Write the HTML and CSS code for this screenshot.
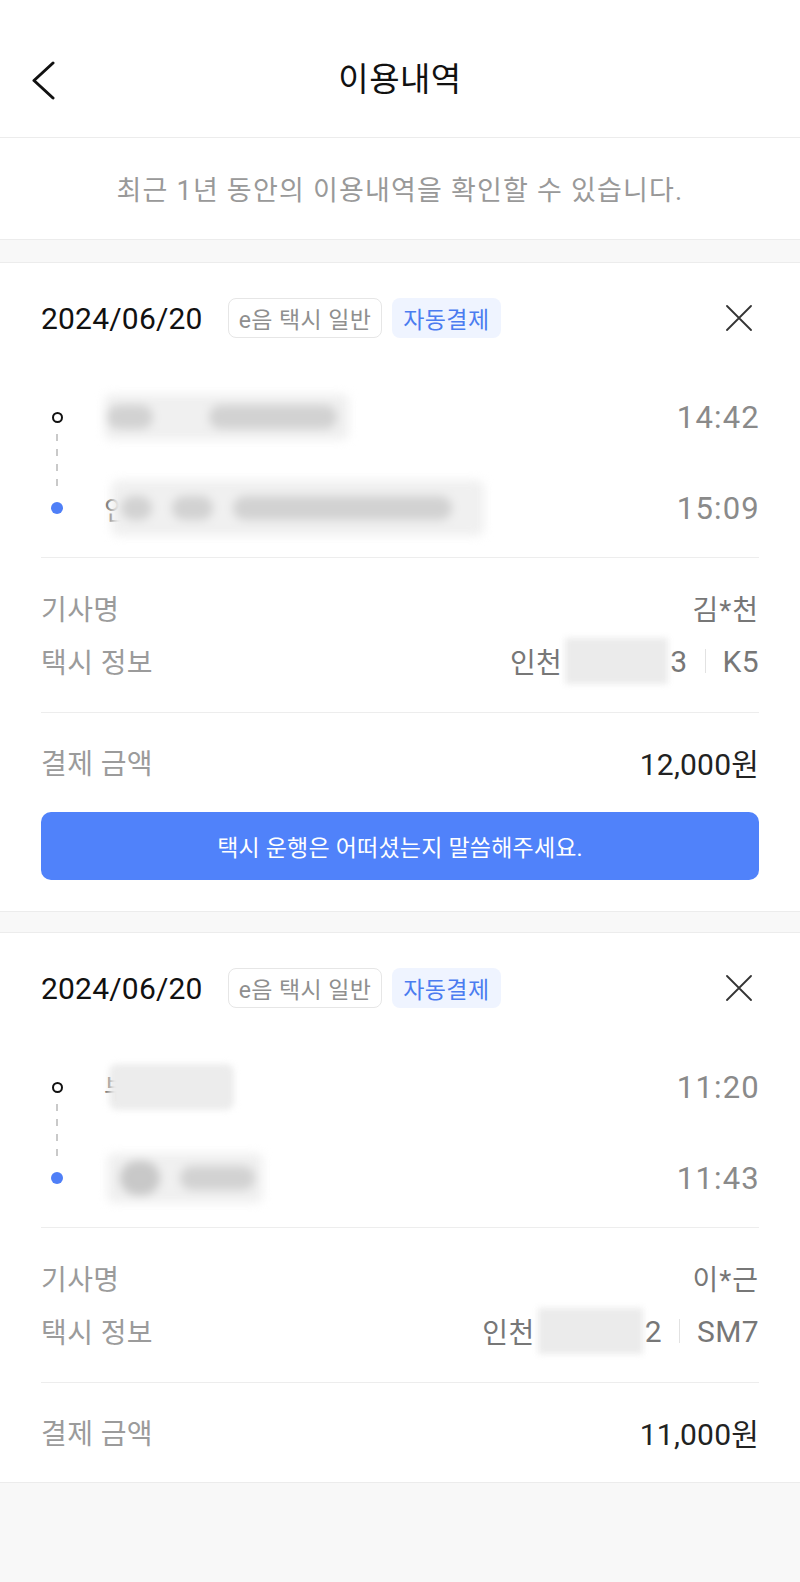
FILE: index.html
```html
<!DOCTYPE html>
<html lang="ko">
<head>
<meta charset="utf-8">
<title>이용내역</title>
<link rel="stylesheet" href="styles.css">
</head>
<body>
<div class="page">
  <header class="topbar">
    <div class="nav">
      <button class="back" aria-label="뒤로">
        <svg width="30" height="40" viewBox="0 0 30 40"><path d="M23 3 L4 20.5 L23 38" fill="none" stroke="#111" stroke-width="3" stroke-linecap="round" stroke-linejoin="round"/></svg>
      </button>
      <h1 class="title">이용내역</h1>
      <span class="nav-spacer"></span>
    </div>
  </header>

  <section class="notice">최근 1년 동안의 이용내역을 확인할 수 있습니다.</section>

  <article class="card card-first">
    <div class="card-head">
      <span class="date">2024/06/20</span>
      <span class="badge badge-line">e음 택시 일반</span>
      <span class="badge badge-blue">자동결제</span>
      <button class="close" aria-label="삭제">
        <svg width="26" height="26" viewBox="0 0 26 26"><path d="M1 1 L25 25 M25 1 L1 25" fill="none" stroke="#333" stroke-width="1.8" stroke-linecap="round"/></svg>
      </button>
    </div>
    <div class="route">
      <div class="track">
        <span class="dot-origin"></span>
        <span class="dash"></span>
        <span class="dot-dest"></span>
      </div>
      <div class="addr">
        <span class="smudge sm-a"><i class="b-46"></i><i class="b-128"></i></span>
      </div>
      <div class="time">14:42</div>
      <div class="addr">
        <span class="peek">인</span>
        <span class="smudge sm-b"><i class="b-31"></i><i class="b-41"></i><i class="b-219"></i></span>
      </div>
      <div class="time">15:09</div>
    </div>
    <div class="info">
      <div class="row"><span class="label">기사명</span><span class="value">김*천</span></div>
      <div class="row"><span class="label">택시 정보</span>
        <span class="value plate"><span class="city">인천</span><span class="plate-mask pm-1"></span><span class="num">3</span><span class="sep"></span><span class="num">K5</span></span>
      </div>
    </div>
    <div class="pay">
      <div class="row"><span class="label">결제 금액</span><span class="amount">12,000원</span></div>
    </div>
    <button class="feedback">택시 운행은 어떠셨는지 말씀해주세요.</button>
  </article>

  <article class="card card-next">
    <div class="card-head">
      <span class="date">2024/06/20</span>
      <span class="badge badge-line">e음 택시 일반</span>
      <span class="badge badge-blue">자동결제</span>
      <button class="close" aria-label="삭제">
        <svg width="26" height="26" viewBox="0 0 26 26"><path d="M1 1 L25 25 M25 1 L1 25" fill="none" stroke="#333" stroke-width="1.8" stroke-linecap="round"/></svg>
      </button>
    </div>
    <div class="route">
      <div class="track">
        <span class="dot-origin"></span>
        <span class="dash"></span>
        <span class="dot-dest"></span>
      </div>
      <div class="addr">
        <span class="peek">부</span>
        <span class="smudge sm-c"></span>
      </div>
      <div class="time">11:20</div>
      <div class="addr">
        <span class="smudge sm-d"><i class="b-40 round"></i><i class="b-75"></i></span>
      </div>
      <div class="time">11:43</div>
    </div>
    <div class="info">
      <div class="row"><span class="label">기사명</span><span class="value">이*근</span></div>
      <div class="row"><span class="label">택시 정보</span>
        <span class="value plate"><span class="city">인천</span><span class="plate-mask pm-2"></span><span class="num">2</span><span class="sep"></span><span class="num">SM7</span></span>
      </div>
    </div>
    <div class="pay">
      <div class="row"><span class="label">결제 금액</span><span class="amount">11,000원</span></div>
    </div>
  </article>
</div>
</body>
</html>
```

FILE: styles.css
```css
* { box-sizing: border-box; }

html, body {
  margin: 0;
  padding: 0;
}

body {
  background: #f8f8f8;
  font-family: Roboto, "Noto Sans CJK KR", sans-serif;
  color: #111;
  min-height: 1582px;
}

.page {
  width: 800px;
}

/* header */
.topbar {
  background: #fff;
  padding: 52px 0 29px;
  border-bottom: 1px solid #ececec;
}

.nav {
  height: 56px;
  display: grid;
  grid-template-columns: 1fr auto 1fr;
  align-items: center;
}

.back {
  justify-self: start;
  margin-left: 30px;
  padding: 0;
  border: 0;
  background: none;
  width: 30px;
  height: 40px;
  display: flex;
}

.title {
  margin: 0;
  font-size: 33px;
  font-weight: 400;
  color: #111;
  line-height: 56px;
  letter-spacing: 0.5px;
}

/* notice */
.notice {
  background: #fff;
  height: 102px;
  border-bottom: 1px solid #ececec;
  display: flex;
  align-items: center;
  justify-content: center;
  font-size: 27px;
  color: #999;
  letter-spacing: 1.2px;
}

/* cards */
.card {
  background: #fff;
  border-top: 1px solid #ececec;
  border-bottom: 1px solid #ececec;
  padding: 35px 41px 0;
}

.card-first { margin-top: 22px; }
.card-next { margin-top: 20px; }

.card-head {
  height: 40px;
  display: flex;
  align-items: center;
  gap: 10px;
}

.date {
  font-size: 30px;
  color: #111;
  margin-right: 15px;
  letter-spacing: 0.2px;
}

.badge {
  height: 40px;
  display: inline-flex;
  align-items: center;
  padding: 0 10px;
  font-size: 23px;
  border-radius: 8px;
  letter-spacing: 0.4px;
}

.badge-line {
  border: 1.5px solid #e6e6e6;
  color: #8f8f8f;
}

.badge-blue {
  background: #eff4ff;
  color: #4b7cf0;
  padding: 0 11px;
}

.close {
  margin-left: auto;
  margin-right: 7px;
  padding: 0;
  border: 0;
  background: none;
  width: 26px;
  height: 26px;
  display: flex;
}

/* route */
.route {
  margin-top: 54px;
  padding-bottom: 24px;
  border-bottom: 1px solid #ededed;
  display: grid;
  grid-template-columns: 32px 1fr auto;
  grid-template-rows: 50px 50px;
  column-gap: 31px;
  row-gap: 41px;
}

.track {
  grid-column: 1;
  grid-row: 1 / 3;
  display: flex;
  flex-direction: column;
  align-items: center;
  padding: 20px 0 19px;
}

.dot-origin {
  width: 11px;
  height: 11px;
  border: 2px solid #111;
  border-radius: 50%;
  flex: none;
}

.dash {
  flex: 1;
  width: 2px;
  margin: 11px 0 11px;
  background: repeating-linear-gradient(to bottom, #c9c9c9 0 7px, transparent 7px 15px);
}

.dot-dest {
  width: 12px;
  height: 12px;
  border-radius: 50%;
  background: #4f7ff7;
  flex: none;
}

.addr {
  display: flex;
  align-items: center;
  min-width: 0;
}

.time {
  font-size: 31px;
  color: #8a8a8a;
  display: flex;
  align-items: center;
  justify-content: flex-end;
  letter-spacing: 1.2px;
  margin-right: -1px;
}

.peek {
  font-size: 27px;
  color: #666;
  flex: none;
}

.smudge {
  display: flex;
  align-items: center;
  height: 46px;
  background: #f0f0f0;
  border-radius: 8px;
  filter: blur(5px);
  flex: none;
}

.smudge i {
  display: block;
  height: 24px;
  background: #d2d2d2;
  border-radius: 12px;
  flex: none;
}

.sm-a { width: 245px; padding-left: 3px; gap: 56px; }
.sm-b { width: 373px; height: 56px; padding-left: 10px; gap: 20px; margin-left: -18px; }
.sm-c { width: 125px; margin-left: -20px; background: #ececec; filter: blur(3px); }
.sm-d { width: 156px; height: 50px; margin-left: 3px; padding-left: 13px; gap: 20px; }

.b-31 { width: 31px; }
.b-40 { width: 40px; }
.b-41 { width: 41px; }
.b-46 { width: 46px; }
.b-75 { width: 75px; }
.b-128 { width: 128px; }
.b-219 { width: 219px; }
.smudge i.round { height: 34px; border-radius: 17px; background: #c8c8c8; }

/* info */
.info {
  padding: 32px 0 33px;
  border-bottom: 1px solid #ededed;
  display: grid;
  row-gap: 17px;
}

.row {
  height: 36px;
  display: flex;
  align-items: center;
  justify-content: space-between;
}

.label {
  font-size: 28px;
  color: #9b9b9b;
  letter-spacing: 0.4px;
}

.value {
  font-size: 28px;
  color: #777;
  letter-spacing: 1px;
}

.plate {
  display: flex;
  align-items: center;
  letter-spacing: 0.4px;
}

.plate .num {
  font-size: 30px;
}

.plate-mask {
  display: block;
  height: 46px;
  background: #ebebeb;
  filter: blur(3px);
  margin: 0 2px 0 3px;
}

.pm-1 { width: 103px; }
.pm-2 { width: 105px; }

.sep {
  display: block;
  width: 1px;
  height: 24px;
  background: #e2e2e2;
  margin: 0 17px;
}

/* pay */
.pay {
  padding: 31px 0 32px;
}

.amount {
  font-size: 30px;
  color: #222;
  letter-spacing: 0.2px;
}

.feedback {
  display: flex;
  align-items: center;
  justify-content: center;
  width: 100%;
  height: 68px;
  margin: 0 0 31px;
  border: 0;
  border-radius: 10px;
  background: #5082fa;
  color: #fff;
  font-family: Roboto, "Noto Sans CJK KR", sans-serif;
  font-size: 23px;
  letter-spacing: 0.2px;
}
```
